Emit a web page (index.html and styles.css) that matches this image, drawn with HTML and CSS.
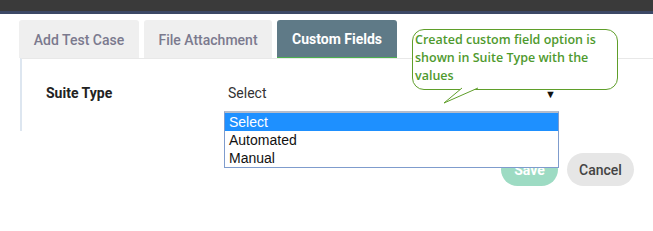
FILE: index.html
```html
<!DOCTYPE html>
<html>
<head>
<meta charset="utf-8">
<link rel="stylesheet" href="styles.css">
</head>
<body>
<div class="topbar"><div class="topbar-dark"></div><div class="topbar-blue"></div></div>
<div class="tabs">
  <div class="tab">Add Test Case</div>
  <div class="tab tab-wide">File Attachment</div>
  <div class="tab active">Custom Fields</div>
</div>
<div class="panel">
  <div class="row">
    <div class="label">Suite Type</div>
    <div class="select">
      <span>Select</span>
      <span class="arrow">&#9660;</span>
    </div>
  </div>
</div>
<div class="actions">
  <button class="btn save">Save</button>
  <button class="btn cancel">Cancel</button>
</div>
<div class="listbox">
  <div class="opt selected">Select</div>
  <div class="opt">Automated</div>
  <div class="opt">Manual</div>
</div>
<div class="callout">
  Created custom field option is shown in Suite Type with the values
  <svg class="tail" width="40" height="20" viewBox="0 0 40 20">
    <path d="M18 0 L0 15 L34 0" fill="#fff" stroke="#5f9e2a" stroke-width="1"/>
  </svg>
</div>
</body>
</html>
```
FILE: styles.css
```css
* { box-sizing: border-box; }
html, body { margin: 0; padding: 0; background: #fff; }
body {
  width: 653px;
  height: 231px;
  overflow: hidden;
  position: relative;
  font-family: Roboto, "Liberation Sans", sans-serif;
}
.topbar-dark { height: 11px; background: #3a3a3a; }
.topbar-blue { height: 3px; background: #3c4866; }
.tabs {
  display: flex;
  gap: 5px;
  margin: 6px 0 0 19px;
  height: 38px;
}
.tab {
  width: 120px;
  background: #efefef;
  border-radius: 3px 3px 0 0;
  color: #7b7a8e;
  font-size: 14px;
  font-weight: 500;
  display: flex;
  align-items: center;
  justify-content: center;
  padding-top: 1px;
}
.tab-wide { width: 128px; }
.tab.active {
  background: #5f7a87;
  color: #fff;
  font-weight: 700;
  border-bottom: 1px solid #4caf50;
}
.panel {
  margin-left: 20px;
  height: 73px;
  border-top: 1px solid #e8e8e8;
  border-left: 2px solid #dde6f0;
}
.row {
  display: flex;
  align-items: center;
  padding-top: 26px;
}
.label {
  width: 206px;
  padding-left: 24px;
  font-size: 14px;
  font-weight: 700;
  color: #222;
}
.select {
  width: 330px;
  display: flex;
  justify-content: space-between;
  align-items: center;
  font-size: 14px;
  color: #333;
}
.arrow { font-size: 11px; color: #111; margin-right: 2px; margin-top: 3px; }
.actions {
  display: flex;
  gap: 9px;
  margin: 22px 0 0 501px;
}
.btn {
  border: none;
  height: 33px;
  border-radius: 17px;
  font-family: Roboto, "Liberation Sans", sans-serif;
  font-size: 14px;
  padding: 0;
}
.save { width: 57px; background: #9ddbc3; color: #fff; font-weight: 700; }
.cancel { width: 67px; background: #e6e6e6; color: #444; font-weight: 500; }
.listbox {
  position: absolute;
  left: 224px;
  top: 111px;
  width: 335px;
  height: 57px;
  border: 1px solid #7f9ccd;
  border-top: 2px solid #b4bccb;
  background: #fff;
  font-family: "Liberation Sans", Arial, sans-serif;
  font-size: 14px;
  color: #111;
}
.opt { height: 18px; line-height: 18px; padding-left: 4px; }
.opt.selected { background: #1e90ff; color: #fff; }
.callout {
  position: absolute;
  left: 412px;
  top: 29px;
  width: 206px;
  height: 61px;
  border: 1.5px solid #5f9e2a;
  border-radius: 12px;
  background: #fff;
  color: #4f9a2e;
  font-family: "Open Sans", sans-serif;
  font-size: 12.5px;
  font-weight: 600;
  line-height: 18px;
  padding: 1px 4px 0 2px;
}
.tail {
  position: absolute;
  left: 31px;
  top: 58px;
  overflow: visible;
}
```
